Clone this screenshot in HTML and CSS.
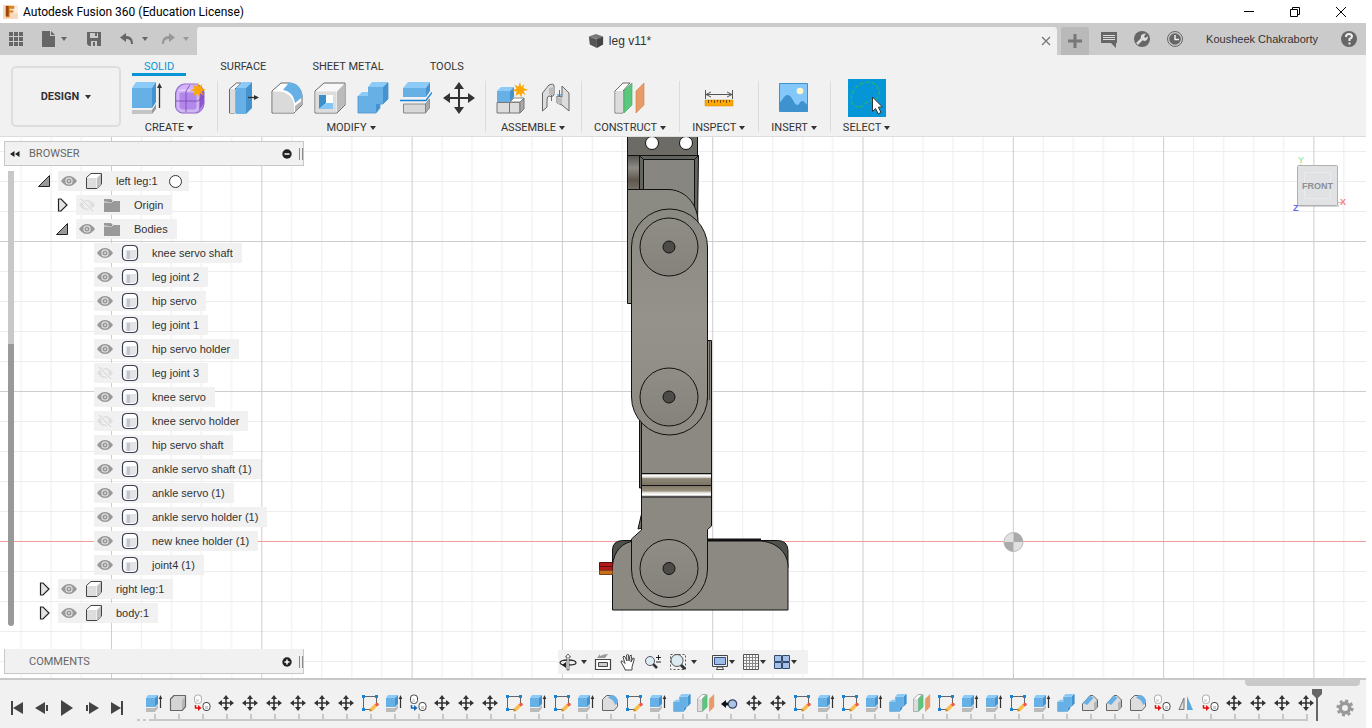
FILE: index.html
```html
<!DOCTYPE html>
<html lang="en">
<head>
<meta charset="utf-8">
<title>Autodesk Fusion 360 (Education License)</title>
<link rel="stylesheet" href="styles.css">
</head>
<body>
<svg class="sprite" aria-hidden="true">
  <symbol id="extrude" viewBox="0 0 32 32"><path fill="#c4c4c4" d="M0 28h20v4H0z"/><path fill="#999" d="m20 28 4-6v5l-4 5z"/><path fill="#66b0e6" d="M0 6h20v20H0z"/><path fill="#8ccaf8" d="m0 6 4-6h20l-4 6z"/><path fill="#4492cf" d="m20 6 4-6v20l-4 6z"/><path stroke="#333" stroke-width="1.300" d="M27.500 26V4"/><path fill="#333" d="m27.500 1 2.500 5h-5z"/></symbol>
  <symbol id="extrude-s" viewBox="0 0 18 18"><path fill="#bbb" d="M1 14h9l3-3v3l-3 4H1z"/><path fill="#66b0e6" d="M1 4h9v9H1z"/><path fill="#8ccaf8" d="m1 4 2-3h10l-3 3z"/><path fill="#4492cf" d="m10 4 3-3v9l-3 3z"/><path stroke="#333" stroke-width="1.200" d="M15.500 14V4"/><path fill="#333" d="m15.500 1 1.800 4h-3.600z"/></symbol>
  <symbol id="star" viewBox="0 0 16 16"><path fill="#fca702" d="m8 0 1.200 4.700L12.500 2l-1.300 4L16 7.800l-4.600 1.400 2.400 4L10 11l-.600 5-2-4.600L3.500 14l1.200-4.400L0 8.500 4.400 6.700 2.500 2.500l3.900 2.300z"/></symbol>
  <symbol id="form" viewBox="0 0 32 32"><path fill="#b388ea" stroke="#8b62c6" d="M.500 11Q2 3 9 2h12q7 2 8 8v12q-1 7-7 9H7q-6-1-6.500-7z"/><path fill="#d3b4fa" d="M2 9q3-6 8-6.500h12L20 9z"/><path fill="#8e57cb" d="m24 12 5-5v14l-5 7z"/><path fill="none" stroke="#fff" stroke-opacity=".4" stroke-width="3" d="M3 11v15q2 3 5 3h12q3-1 3-4V11q-2-2-5-2H7q-3 0-4 2z"/><path fill="none" stroke="#7444b0" stroke-width=".8" d="M11 9v21M1 19h22l6-5M11 9l4-6"/><use href="#star" x="15" y="0" width="16" height="16"/></symbol>
  <symbol id="press" viewBox="0 0 32 32"><path fill="#fafafa" stroke="#666" d="M1.500 31V7l7-6H13L7 7v24z"/><path fill="#dcdcdc" d="M2 7h5v24H2z"/><path fill="#66b0e6" d="M8 6h10v26H8z"/><path fill="#8ccaf8" d="m8 6 6-6h10l-6 6z"/><path fill="#4492cf" d="m18 6 6-6v26l-6 6z"/><path stroke="#333" stroke-width="1.300" d="M20 15.500h9"/><path fill="#333" d="m31 15.500-5-2.500v5z"/></symbol>
  <symbol id="fillet" viewBox="0 0 32 32"><path fill="#fff" stroke="#666" stroke-linejoin="round" d="M1 31V9L10 1h7c9 0 14 7 14 14v8l-8 8z"/><path fill="#dadada" d="M2 9.500h8C18 11 23 17 23 24v6.500H2z"/><path fill="#66b0e6" d="m12 8 6-7.500c8 0 13.500 6 13.500 14.500L24 21C23 14 19 9 12 8z"/><path fill="#b5b5b5" d="m24 24 6.500-5v4l-6.500 7z"/></symbol>
  <symbol id="fillet-s" viewBox="0 0 18 18"><path fill="#ddd" stroke="#666" stroke-linejoin="round" d="M1.500 16.500V5.500L5.500 1.500H9c5 0 7.500 4 7.500 7v4l-3.500 4z"/><path fill="#66b0e6" d="m7 4 2.500-3c5 0 7.500 3.500 7.500 7.500L14 11C13 7 11 4.500 7 4z"/></symbol>
  <symbol id="shell" viewBox="0 0 32 32"><path fill="#f8f8f8" stroke="#666" d="M1 31V9l9-8h21v22l-8 8z"/><path fill="#ddd" d="M1.500 9.500h21v21h-21z"/><path fill="#bbb" d="m23 9.500 7.500-8v21L23 30.500z"/><path fill="#fff" d="M5 13h14v14H5z"/><path fill="#3d8fc9" d="M5 13h7v8l-7 6z"/><path fill="#84c5f7" d="m5 27 7-6h7v6z"/></symbol>
  <symbol id="combine" viewBox="0 0 32 32"><path fill="#66b0e6" d="M1 14h10V5h15v17h-7v9H1z"/><path fill="#8ccaf8" d="m1 14 4-4h6v4zM11 5l4-5h16l-5 5z"/><path fill="#4492cf" d="m26 5 5-5v17l-5 5zm-7 17h4v4l-4 5z"/><path fill="none" stroke="#4a95ca" stroke-width=".8" d="M1 14v17h18l4-5v-4h3l5-5V1"/></symbol>
  <symbol id="split" viewBox="0 0 32 32"><path fill="#66b0e6" d="M3 6h23v9H3z"/><path fill="#8ccaf8" d="m3 6 5-6h22l-4 6z"/><path fill="#4492cf" d="m26 6 4-6v9l-4 6z"/><path fill="#d8d8d8" stroke="#888" d="M3.500 22h22v9h-22z"/><path fill="#aaa" stroke="#777" stroke-width=".7" d="m25.500 22 4-5v9l-4 5z"/><path fill="none" stroke="#1784d8" stroke-width="1.300" d="M0 18.500h26l6-8"/></symbol>
  <symbol id="move" viewBox="0 0 32 32"><path fill="#333" d="m16 0 5 7h-4v8h8v-4l7 5-7 5v-4h-8v8h4l-5 7-5-7h4v-8H7v4l-7-5 7-5v4h8V7h-4z"/></symbol>
  <symbol id="move-s" viewBox="0 0 16 16"><path fill="#333" d="m8 0 3 4H8.800v3.200H12V5l4 3-4 3V8.800H8.800V12H11l-3 4-3-4h2.200V8.800H4V11L0 8l4-3v2.200h3.200V4H5z"/></symbol>
  <symbol id="component" viewBox="0 0 32 32"><path fill="#66b0e6" d="M1 9h13v11H1z"/><path fill="#8ccaf8" d="m1 9 4-4h13l-4 4z"/><path fill="#4492cf" d="m14 9 4-4v10l-4 5z"/><path fill="#ddd" stroke="#777" d="M1 20.500h12.500V31H1zm12.500 0H24V31H13.500z"/><path fill="#fff" stroke="#888" d="m14 20 4-4h10l-4 4z"/><path fill="#aaa" stroke="#777" d="m24 20.500 4-4.500v11l-4 4z"/><use href="#star" x="16" y="0" width="16" height="16"/></symbol>
  <symbol id="joint" viewBox="0 0 32 32"><path fill="#ddd" stroke="#666" d="M3.500 29V11L10 3q5-2 5 1v9q-2 3-5 1-2 0-2 4v7zM30 29V11l-7-7v11l-5-1v7l5 2z"/><path fill="#bbb" d="m10 6 5-1v7q-3 2-5 0zM18 15q2 2 5 1v6q-4 1-5-1z"/><path fill="none" stroke="#1784d8" d="M12.500 13v6m8-11v6m-2-2 2 2 2-2"/></symbol>
  <symbol id="plane" viewBox="0 0 32 32"><path fill="#fff" stroke="#666" d="M1 31V9l8-8h7L9 9v22z"/><path fill="#dcdcdc" d="M1.500 9H9v21.500H1.500z"/><path fill="#5ac77d" stroke="#3ca461" stroke-width=".6" d="m10 9 8-8v22l-8 8z"/><path fill="#e99a69" stroke="#d47d45" stroke-width=".6" d="m22 9 8-8v22l-8 8z"/></symbol>
  <symbol id="measure" viewBox="0 0 32 32"><path stroke="#555" fill="none" d="M2.500 8v9m27-9v9M4 12.500h24M8 10l-5 2.500L8 15m16-5 5 2.500-5 2.500"/><path fill="#fca702" stroke="#d28a00" stroke-width=".5" d="M2 18h28v6H2z"/><path stroke="#795000" d="M5.500 18v3m3-3v2m3-2v3m3-3v2m3-2v3m3-3v2m3-2v3m3-3v2"/></symbol>
  <symbol id="picture" viewBox="0 0 32 32"><path fill="#84c8fb" stroke="#3e92cd" d="M1.500 1.500h28v28h-28z"/><circle cx="22" cy="9" r="3.300" fill="#fff7cb"/><path fill="#3e92cd" d="M2 20c3-2 4-7 7.500-7 5 0 6 10 10 10 2 0 2-4 5-4 2 0 3 3 5 4v7H2z"/></symbol>
  <symbol id="select" viewBox="0 0 38 38"><path fill="none" stroke="#2ab46c" stroke-width="1.200" stroke-dasharray="4 2" d="M11 28c-9-1-9-8-6-15S15 3 21 3c8 1 11 7 10 13-2 7-8 4-12 7-3 2-4 6-8 5z"/><path fill="#fff" stroke="#333" d="M24.500 18v14.500l3-3 2.700 5.300 2.800-1.300-2.600-5.300 4-.200z"/></symbol>
  <symbol id="cube" viewBox="0 0 18 18"><path fill="#fff" stroke="#444" stroke-linejoin="round" d="M1.500 5.500 6 1.500h10.500V12L12 16.500H1.500z"/><path fill="#ddd" d="M2 6h9.500v10H2z"/><path fill="#bfc0c4" d="m12 6 4-4v10l-4 4z"/></symbol>
  <symbol id="solid-s" viewBox="0 0 18 18"><path fill="#d4d4d4" stroke="#666" stroke-width="1.200" stroke-linejoin="round" d="M1.500 5 5 1.500h11.500v11L13 16.500H1.500z"/><path fill="#b5b5b5" d="m13 6 3-3v9l-3 4z"/></symbol>
  <symbol id="body" viewBox="0 0 18 18"><path fill="#fff" stroke="#394052" stroke-width="1.200" d="M1.500 6q0-4.500 4.500-4.500h6q4.500 0 4.500 4.500v6q0 4.500-4.500 4.500H6q-4.500 0-4.500-4.500z"/><path fill="#e2e4ea" d="M3 6h12v6q0 3-3 3H6q-3 0-3-3z"/><path fill="#c2c5cc" d="M6 7h3v8H6z"/><path fill="#fff" d="M3 6h1.500v7H3z"/></symbol>
  <symbol id="folder" viewBox="0 0 18 16"><path fill="#999" d="M1 2h7l2 2h7v11H1z"/><path stroke="#eee" d="M1 5h8l1-1"/></symbol>
  <symbol id="eye" viewBox="0 0 16 12"><path fill="#999" d="M0 6q3.500-5 8-5t8 5q-3.500 5-8 5T0 6z"/><circle cx="8" cy="6" r="3.600" fill="#eee"/><circle cx="8" cy="6" r="2.600" fill="#999"/><circle cx="8" cy="6" r="1" fill="#ddd"/></symbol>
  <symbol id="eye-off" viewBox="0 0 16 12"><path fill="#dedede" d="M0 6q3.500-5 8-5t8 5q-3.500 5-8 5T0 6z"/><circle cx="8" cy="6" r="3.500" fill="#f1f1f1"/><circle cx="8" cy="6" r="2" fill="#dedede"/><path stroke="#f1f1f1" stroke-width="3" d="m2 0 12 12"/><path stroke="#d0d0d0" d="m2 0 12 12"/></symbol>
  <symbol id="open" viewBox="0 0 14 14"><path fill="#999" stroke="#222" d="M12.500 1.500v11h-11z"/></symbol>
  <symbol id="closed" viewBox="0 0 14 14"><path fill="#e4e4e4" stroke="#222" stroke-width="1.200" d="M3.500 1H6l6 6-6 6H3.500z"/></symbol>
  <symbol id="sketch" viewBox="0 0 18 18"><path fill="none" stroke="#666" d="M3 2.500h12.500V10M2.500 3v12.500H9"/><path fill="#1784d8" d="M1 1h3v3H1zm13 0h3v3h-3zM1 14h3v3H1z"/><path stroke="#f9bd4c" stroke-width="3.500" d="m10 16 5-5"/><path fill="#c48420" d="m8.500 17.500.300-3 2.500 2.500z"/><circle cx="16" cy="10.500" r="1.800" fill="#f05454"/></symbol>
  <symbol id="link-parts" viewBox="0 0 18 18"><rect x="1.500" y="1" width="7" height="8.500" rx="3" fill="#fff" stroke="currentColor"/><path fill="#ddd" d="M3 5h3v3H3z"/><rect x="10" y="8.500" width="7" height="8" rx="3" fill="#fff" stroke="#444"/><path fill="#ccc" d="M12 12h3v3h-3z"/></symbol>
  <symbol id="joint-red" viewBox="0 0 18 18"><use href="#link-parts" width="18" height="18" color="#aaa"/><path fill="none" stroke="#e61212" stroke-width="1.500" d="M2.500 11v3H6"/><path fill="#e61212" d="m8.500 14-3.500-3v6z"/></symbol>
  <symbol id="joint-blue" viewBox="0 0 18 18"><use href="#link-parts" width="18" height="18" color="#444"/><path fill="none" stroke="#1464b4" stroke-width="1.500" d="M2.500 11v3H6"/><path fill="#1464b4" d="m8.500 14-3.500-3v6z"/></symbol>
  <symbol id="origin-joint" viewBox="0 0 18 18"><path fill="#111" d="m0 10 5-4v2.500h4v3H5V14z"/><circle cx="11.500" cy="10" r="4.200" fill="#abc4e8" stroke="#3a4763" stroke-width="1.200"/></symbol>
  <symbol id="chamfer" viewBox="0 0 18 18"><path fill="#ddd" stroke="#666" stroke-linejoin="round" d="M1.500 16.500V10L9 1.500h3L16.500 6v7L13 16.500z"/><path fill="#b5b5b5" d="m13 9 3-3v7l-3 3z"/><path fill="#66b0e6" d="m2 8.500 7-7L12.500 4l-6.500 7z"/></symbol>
  <symbol id="mirror" viewBox="0 0 18 18"><path fill="#ddd" stroke="#777" d="M7 4v11.500H2z"/><path fill="#5aaae2" d="M10 2v14h6z"/></symbol>
</svg>

<header class="titlebar">
  <svg class="logo" viewBox="0 0 16 16"><path fill="#f8d9bd" d="M0 1h16v15H0z"/><path fill="#fff" d="M11 0h5v10h-5z" opacity=".5"/><path fill="#e07e22" d="M3 2h9v3H7v2h4v2H7v5H3z"/><path fill="#99480c" d="M3 2h3v11H3z"/></svg>
  <h1>Autodesk Fusion 360 (Education License)</h1>
  <div class="window-buttons">
    <button aria-label="Minimize"><svg viewBox="0 0 12 12"><path d="M1 5.500h10"/></svg></button>
    <button aria-label="Restore"><svg viewBox="0 0 12 12"><path d="M1.500 3.500h7v7h-7zM3.500 3V1.500h7v7H9"/></svg></button>
    <button aria-label="Close"><svg viewBox="0 0 12 12"><path d="m1 1 10 10M11 1 1 11"/></svg></button>
  </div>
</header>

<div class="appbar">
  <div class="quick">
    <button aria-label="Data panel"><svg viewBox="0 0 16 16"><path d="M1 1h4v4H1zm5 0h4v4H6zm5 0h4v4h-4zM1 6h4v4H1zm5 0h4v4H6zm5 0h4v4h-4zM1 11h4v4H1zm5 0h4v4H6zm5 0h4v4h-4z"/></svg></button>
    <button aria-label="File"><svg viewBox="0 0 16 16"><path d="M1 0h8v5h5v11H1zm9 0 4 4h-4z"/></svg><i class="caret"></i></button>
    <button class="save" aria-label="Save"><svg viewBox="0 0 16 16"><path fill-rule="evenodd" d="M1 1h14v14H3l-2-2zm3 1v5h8V2zm1 8v5h6v-5z"/><path d="M9 2h2v3H9zM7 11h2v4H7z"/></svg></button>
    <button class="undo" aria-label="Undo"><svg viewBox="0 0 16 16"><path d="M7 2v3c5 0 7 3 7 8h-2c0-4-2-5-5-5v3L1 6.500z"/></svg><i class="caret"></i></button>
    <button class="redo" aria-label="Redo" disabled><svg viewBox="0 0 16 16"><path d="M9 2v3c-5 0-7 3-7 8h2c0-4 2-5 5-5v3l6-4.500z"/></svg><i class="caret"></i></button>
  </div>
  <div class="document">
    <span class="document-name"><svg viewBox="0 0 18 18"><path fill="#777" d="m1 4 8-3 8 3-6 3z"/><path fill="#555" d="m1 4 9 3v10l-8-4z"/><path fill="#444" d="m10 7 7-3v9l-7 4z"/></svg>leg v11*</span>
    <button aria-label="Close leg v11"><svg viewBox="0 0 10 10"><path fill="none" stroke="#777" stroke-width="1.300" d="m1 1 8 8M9 1 1 9"/></svg></button>
  </div>
  <button class="new-tab" aria-label="New design"><svg viewBox="0 0 14 14"><path stroke="#777" stroke-width="3" d="M7 0v14M0 7h14"/></svg></button>
  <div class="account">
    <button aria-label="Comments"><svg viewBox="0 0 18 18"><path d="M1 2h16v11h-1v5l-5-5H1z"/><path stroke="#ddd" d="M3 5.500h12m-12 2h12m-12 2h12"/></svg></button>
    <button aria-label="Extensions"><svg viewBox="0 0 18 18"><circle cx="9" cy="9" r="8"/><path stroke="#ddd" stroke-width="2.500" d="m4 14 6-6"/><path fill="#ddd" d="M8 9q-1-4 2-5l3-.500-2 3 1.500 1.500L15 6q0 5-4 5z"/></svg></button>
    <button aria-label="Job status"><svg viewBox="0 0 18 18"><circle cx="9" cy="9" r="7.500" fill="none" stroke="#666"/><circle cx="9" cy="9" r="5.800"/><path fill="none" stroke="#eee" stroke-width="1.500" d="M9 5v4.500h4"/></svg></button>
    <button class="user">Kousheek Chakraborty</button>
    <button aria-label="Help"><svg viewBox="0 0 18 18"><circle cx="9" cy="9" r="8"/><path fill="none" stroke="#eee" stroke-width="2" d="M6 7q0-3 3-3t3 2.500Q12 8 9.500 9v2"/><path fill="#eee" d="M8.500 12.500h2v2h-2z"/></svg></button>
  </div>
</div>

<div class="ribbon">
  <button class="workspace">DESIGN<i class="caret"></i></button>
  <div class="ribbon-body">
    <nav class="tabs"><button class="tab active">SOLID</button><button class="tab">SURFACE</button><button class="tab">SHEET METAL</button><button class="tab">TOOLS</button></nav>
    <div class="groups">
      <section class="group"><div class="tools"><button aria-label="Extrude"><svg><use href="#extrude"/></svg></button><button aria-label="Create form"><svg><use href="#form"/></svg></button></div><button class="menu">CREATE<i class="caret"></i></button></section>
      <section class="group"><div class="tools"><button aria-label="Press pull"><svg><use href="#press"/></svg></button><button aria-label="Fillet"><svg><use href="#fillet"/></svg></button><button aria-label="Shell"><svg><use href="#shell"/></svg></button><button aria-label="Combine"><svg><use href="#combine"/></svg></button><button aria-label="Split body"><svg><use href="#split"/></svg></button><button aria-label="Move"><svg><use href="#move"/></svg></button></div><button class="menu">MODIFY<i class="caret"></i></button></section>
      <section class="group"><div class="tools"><button aria-label="New component"><svg><use href="#component"/></svg></button><button aria-label="Joint"><svg><use href="#joint"/></svg></button></div><button class="menu">ASSEMBLE<i class="caret"></i></button></section>
      <section class="group"><div class="tools"><button aria-label="Offset plane"><svg><use href="#plane"/></svg></button></div><button class="menu">CONSTRUCT<i class="caret"></i></button></section>
      <section class="group"><div class="tools"><button aria-label="Measure"><svg><use href="#measure"/></svg></button></div><button class="menu">INSPECT<i class="caret"></i></button></section>
      <section class="group"><div class="tools"><button aria-label="Insert image"><svg><use href="#picture"/></svg></button></div><button class="menu">INSERT<i class="caret"></i></button></section>
      <section class="group"><div class="tools"><button class="selected" aria-label="Select"><svg><use href="#select"/></svg></button></div><button class="menu">SELECT<i class="caret"></i></button></section>
    </div>
  </div>
</div>

<main class="canvas">
  <svg class="scene" aria-label="Leg model, front view">
    <defs>
      <pattern id="grid" x="111" y="91" width="150.300" height="150" patternUnits="userSpaceOnUse">
        <path fill="none" stroke="#ededed" d="M30.500 0v151M60.500 0v151M90.500 0v151M120.500 0v151M0 30.500h151M0 60.500h151M0 90.500h151M0 120.500h151"/>
        <path fill="none" stroke="#cdcdcd" d="M.500 0v151M0 .500h151"/>
      </pattern>
      <linearGradient id="metal" x1="0" y1="0" x2="0" y2="1"><stop offset="0" stop-color="#8b8a82"/><stop offset=".5" stop-color="#94928b"/><stop offset="1" stop-color="#8c8a82"/></linearGradient>
      <linearGradient id="disc" x1="0" y1="0" x2="0" y2="1"><stop offset="0" stop-color="#8f8d85"/><stop offset="1" stop-color="#84827b"/></linearGradient>
      <linearGradient id="pocket" x1="0" y1="0" x2="0" y2="1"><stop offset="0" stop-color="#55544f"/><stop offset=".35" stop-color="#8e8b86"/><stop offset=".7" stop-color="#5e574d"/><stop offset="1" stop-color="#77736b"/></linearGradient>
      <linearGradient id="band" x1="0" y1="0" x2="0" y2="1"><stop offset="0" stop-color="#777069"/><stop offset=".08" stop-color="#fff"/><stop offset=".16" stop-color="#ddd8d2"/><stop offset=".22" stop-color="#8c8474"/><stop offset=".5" stop-color="#7b7464"/><stop offset=".74" stop-color="#9b927f"/><stop offset=".82" stop-color="#eae6e2"/><stop offset=".9" stop-color="#fff"/><stop offset="1" stop-color="#777"/></linearGradient>
    </defs>
    <g transform="translate(0 -137)">
      <rect y="137" width="100%" height="100%" fill="url(#grid)"/>
      <rect y="541" width="100%" height="1" fill="#f09c9c"/>
      <rect x="1013" y="674" width="1" height="4" fill="#90ee90"/>
      <g stroke="#111">
        <path fill="#6c6b66" d="M627.500 130h70v26h-70z"/>
        <circle cx="652" cy="143" r="6.500" fill="#fff"/><circle cx="686" cy="143" r="6.500" fill="#fff"/>
        <path fill="url(#pocket)" d="M627.500 155.500h12v35h-12z"/>
        <path fill="#62655f" d="M639.500 155.500h59l-1 69h-58z"/>
        <path fill="#878680" d="M643.500 159.500h51v64h-51z"/>
        <path fill="none" d="m639.500 155.500 4 4m51 0 4-4"/>
        <path fill="#8b8a83" d="M627.500 189.500H668c16 0 29 13 30 31v83h-70.500z"/>
        <path fill="#706e68" d="M639.500 420h8v68h-8zM638 529l4-17v16z"/>
        <path fill="#4f514c" d="M612.500 568v-18q0-9 10-9.500h155q10 0 10.500 10v17z"/>
        <path fill="#8b8982" d="M612.500 610v-44c1-15 10-24 22-25h124c16 0 29 10 29.500 25v44z"/>
        <path stroke-width="2" d="M707 539.500h54"/>
        <path fill="#8b8982" d="M641.500 400h66v-59.500h4V526l-4 3.500V569a38 38 0 0 1-76 0v-30l10-9z"/>
        <path fill="none" stroke="#444" d="M709.500 341v59"/>
        <path fill="url(#metal)" d="M631.500 247a38 38 0 0 1 76 0v150a38 38 0 0 1-76 0z"/>
        <path fill="url(#band)" d="M641.500 473.500h70v23.500h-70z"/><path d="M641 485.500h70"/>
        <g fill="url(#disc)"><circle cx="669" cy="247" r="29"/><circle cx="669" cy="397" r="29"/><circle cx="669" cy="568.500" r="29"/></g>
        <g fill="#4c4b47"><circle cx="669" cy="247" r="6"/><circle cx="669" cy="397" r="6"/><circle cx="669" cy="568.500" r="6"/></g>
        <path fill="#b31818" stroke="#511" d="M599.500 562.500h13v8h-13zm0 4h13"/><path fill="#c96f16" stroke="#742" d="M599.500 570.500h13v4h-13z"/>
      </g>
      <circle cx="1013.500" cy="542" r="9.500" fill="#e0e0e0" stroke="#bbb"/><path fill="#aaa" d="M1013.500 542v-9.500a9.500 9.500 0 0 1 9.500 9.500zm0 0v9.500a9.500 9.500 0 0 1-9.500-9.500z"/>
    </g>
  </svg>

  <aside class="browser">
    <header class="panel-head"><button aria-label="Collapse browser"><svg viewBox="0 0 12 10"><path d="M5.500 2v6L1 5zm5 0v6L6 5z"/></svg></button><h2>BROWSER</h2><button aria-label="Minimize browser"><svg viewBox="0 0 10 10"><circle cx="5" cy="5" r="4.700"/><path stroke="#fff" stroke-width="1.500" d="M2.500 5h5"/></svg></button><i class="grip"></i></header>
    <div class="tree-area">
      <div class="tree-scroll"></div>
      <ul class="tree">
        <li><svg class="twist"><use href="#open"/></svg><div class="node"><svg class="eye"><use href="#eye"/></svg><svg class="kind"><use href="#cube"/></svg><span>left leg:1</span><input type="radio" aria-label="Activate left leg"></div></li>
        <li class="level-1"><svg class="twist"><use href="#closed"/></svg><div class="node"><svg class="eye"><use href="#eye-off"/></svg><svg class="kind"><use href="#folder"/></svg><span>Origin</span></div></li>
        <li class="level-1"><svg class="twist"><use href="#open"/></svg><div class="node"><svg class="eye"><use href="#eye"/></svg><svg class="kind"><use href="#folder"/></svg><span>Bodies</span></div></li>
        <li class="level-2"><div class="node"><svg class="eye"><use href="#eye"/></svg><svg class="kind"><use href="#body"/></svg><span>knee servo shaft</span></div></li>
        <li class="level-2"><div class="node"><svg class="eye"><use href="#eye"/></svg><svg class="kind"><use href="#body"/></svg><span>leg joint 2</span></div></li>
        <li class="level-2"><div class="node"><svg class="eye"><use href="#eye"/></svg><svg class="kind"><use href="#body"/></svg><span>hip servo</span></div></li>
        <li class="level-2"><div class="node"><svg class="eye"><use href="#eye"/></svg><svg class="kind"><use href="#body"/></svg><span>leg joint 1</span></div></li>
        <li class="level-2"><div class="node"><svg class="eye"><use href="#eye"/></svg><svg class="kind"><use href="#body"/></svg><span>hip servo holder</span></div></li>
        <li class="level-2"><div class="node"><svg class="eye"><use href="#eye-off"/></svg><svg class="kind"><use href="#body"/></svg><span>leg joint 3</span></div></li>
        <li class="level-2"><div class="node"><svg class="eye"><use href="#eye"/></svg><svg class="kind"><use href="#body"/></svg><span>knee servo</span></div></li>
        <li class="level-2"><div class="node"><svg class="eye"><use href="#eye-off"/></svg><svg class="kind"><use href="#body"/></svg><span>knee servo holder</span></div></li>
        <li class="level-2"><div class="node"><svg class="eye"><use href="#eye"/></svg><svg class="kind"><use href="#body"/></svg><span>hip servo shaft</span></div></li>
        <li class="level-2"><div class="node"><svg class="eye"><use href="#eye"/></svg><svg class="kind"><use href="#body"/></svg><span>ankle servo shaft (1)</span></div></li>
        <li class="level-2"><div class="node"><svg class="eye"><use href="#eye"/></svg><svg class="kind"><use href="#body"/></svg><span>ankle servo (1)</span></div></li>
        <li class="level-2"><div class="node"><svg class="eye"><use href="#eye"/></svg><svg class="kind"><use href="#body"/></svg><span>ankle servo holder (1)</span></div></li>
        <li class="level-2"><div class="node"><svg class="eye"><use href="#eye"/></svg><svg class="kind"><use href="#body"/></svg><span>new knee holder (1)</span></div></li>
        <li class="level-2"><div class="node"><svg class="eye"><use href="#eye"/></svg><svg class="kind"><use href="#body"/></svg><span>joint4 (1)</span></div></li>
        <li><svg class="twist"><use href="#closed"/></svg><div class="node"><svg class="eye"><use href="#eye"/></svg><svg class="kind"><use href="#cube"/></svg><span>right leg:1</span></div></li>
        <li><svg class="twist"><use href="#closed"/></svg><div class="node"><svg class="eye"><use href="#eye"/></svg><svg class="kind"><use href="#cube"/></svg><span>body:1</span></div></li>
      </ul>
    </div>
    <header class="panel-head comments"><h2>COMMENTS</h2><button aria-label="Add comment"><svg viewBox="0 0 10 10"><circle cx="5" cy="5" r="4.700"/><path stroke="#fff" stroke-width="1.500" d="M2.500 5h5M5 2.500v5"/></svg></button><i class="grip"></i></header>
  </aside>

  <svg class="viewcube" viewBox="0 0 60 64" aria-label="View cube">
    <path stroke="#bfe8b4" d="M10.500 10v3"/><path stroke="#f0b0b0" d="M46 48.500h6"/>
    <path fill="#aaa" opacity=".5" d="M9 50h40v3H9z"/>
    <rect x="7.500" y="11.500" width="40" height="40" rx="1" fill="#e1e2e4" stroke="#b0b0b0"/><path fill="none" stroke="#eaeaea" d="M14.500 18.500h26v26h-26z"/>
    <text class="cube-face" x="27.500" y="35" text-anchor="middle">FRONT</text>
    <text class="axis" x="8" y="9" fill="#a5eca5">Y</text><text class="axis" x="50" y="51" fill="#f58080">X</text><text class="axis" x="3" y="57" fill="#6464ee">Z</text>
  </svg>

  <div class="viewbar">
    <button aria-label="Orbit"><svg viewBox="0 0 18 18"><path fill="none" stroke="#333" stroke-width="1.300" d="M1 10q0-3 8-3t8 3q0 2-8 2M1 10q1 2 5 2"/><path fill="#fff" stroke="#444" stroke-width=".8" d="M8 17V4L6.500 4 9 1l2.500 3H10v13z"/><path fill="#222" d="m3 12 4-3v6z"/></svg><i class="caret"></i></button>
    <button aria-label="Look at"><svg viewBox="0 0 18 18"><path fill="#fff" stroke="#444" stroke-width="1.200" d="M1.500 6.500h15v10h-15z"/><path fill="#ccc" stroke="#444" d="M4.500 9.500h9v4h-9z"/><path fill="#999" d="m3 5 3-4v2q4-2 8-2l-3 4z"/></svg></button>
    <button aria-label="Pan"><svg viewBox="0 0 18 18"><path fill="#fff" stroke="#444" stroke-linejoin="round" d="M6 16 2 9q0-2 2-.500l2 2L4 4q1-2 2 0l2 4-.500-6q1.500-1 2 0l.500 6 1-5.500q2-1 1.500 1L12 9l2-4q2 0 1 2l-2 7v3H6z"/></svg></button>
    <button aria-label="Zoom"><svg viewBox="0 0 18 18"><path stroke="#333" stroke-width="2.500" d="m9 11 4 4"/><circle cx="6" cy="8" r="4.500" fill="#dcecf2" stroke="#556"/><path stroke="#222" d="M12 4.500h5M14.500 2v5m-2.500 2h5"/></svg></button>
    <button aria-label="Fit"><svg viewBox="0 0 18 18"><path fill="none" stroke="#555" stroke-dasharray="2 2" d="M1.500 1.500h15v15h-15z"/><path stroke="#333" stroke-width="3" d="m11 11 5 5"/><circle cx="8" cy="7.500" r="6" fill="#dcebf0" stroke="#555"/></svg><i class="caret"></i></button>
    <button class="compact apart" aria-label="Display settings"><svg viewBox="0 0 18 18"><path fill="#eee" stroke="#444" d="M1.500 2.500h15v11h-15z"/><path fill="#9dbce8" stroke="#334f85" d="M3.500 4.500h11v7h-11z"/><path fill="#fff" stroke="#444" d="M6.500 14h5l1 2.500h-7z"/></svg><i class="caret"></i></button>
    <button class="compact" aria-label="Grid"><svg viewBox="0 0 18 18"><path fill="#f8f8f8" stroke="#555" d="M1.500 1.500h15v15h-15z"/><path stroke="#888" d="M4.500 2v14m3-14v14m3-14v14m3-14v14M2 4.500h14m-14 3h14m-14 3h14m-14 3h14"/></svg><i class="caret"></i></button>
    <button class="compact" aria-label="Viewports"><svg viewBox="0 0 18 18"><path fill="#a5c1e8" stroke="#334a70" d="M1.500 2.500h7v6h-7zm8 0h7v6h-7zm-8 7h7v6h-7zm8 0h7v6h-7z"/></svg><i class="caret"></i></button>
  </div>
</main>

<footer class="timeline">
  <div class="playback">
    <button aria-label="First"><svg viewBox="0 0 16 16"><path d="M2 1h2v14H2zm12 1v12L4 8z"/></svg></button>
    <button aria-label="Step back"><svg viewBox="0 0 16 16"><path d="M11 2v12L1 8zm1 3h2v6h-2z"/></svg></button>
    <button aria-label="Play"><svg viewBox="0 0 16 16"><path d="M2 0v16l12-8z"/></svg></button>
    <button aria-label="Step forward"><svg viewBox="0 0 16 16"><path d="M5 2v12l10-6zM2 5h2v6H2z"/></svg></button>
    <button aria-label="Last"><svg viewBox="0 0 16 16"><path d="M2 2v12l10-6zm10-1h2v14h-2z"/></svg></button>
  </div>
  <ol class="features">
    <li><svg><use href="#extrude-s"/></svg></li><li><svg><use href="#solid-s"/></svg></li><li><svg><use href="#joint-red"/></svg></li><li><svg class="arrows"><use href="#move-s"/></svg></li><li><svg class="arrows"><use href="#move-s"/></svg></li><li><svg class="arrows"><use href="#move-s"/></svg></li><li><svg class="arrows"><use href="#move-s"/></svg></li><li><svg class="arrows"><use href="#move-s"/></svg></li><li><svg class="arrows"><use href="#move-s"/></svg></li><li><svg><use href="#sketch"/></svg></li>
    <li><svg><use href="#extrude-s"/></svg></li><li><svg><use href="#joint-blue"/></svg></li><li><svg class="arrows"><use href="#move-s"/></svg></li><li><svg class="arrows"><use href="#move-s"/></svg></li><li><svg class="arrows"><use href="#move-s"/></svg></li><li><svg><use href="#sketch"/></svg></li><li><svg><use href="#extrude-s"/></svg></li><li><svg><use href="#sketch"/></svg></li><li><svg><use href="#extrude-s"/></svg></li><li><svg><use href="#fillet-s"/></svg></li>
    <li><svg><use href="#sketch"/></svg></li><li><svg><use href="#extrude-s"/></svg></li><li><svg><use href="#combine"/></svg></li><li><svg><use href="#plane"/></svg></li><li><svg><use href="#origin-joint"/></svg></li><li><svg class="arrows"><use href="#move-s"/></svg></li><li><svg class="arrows"><use href="#move-s"/></svg></li><li><svg><use href="#sketch"/></svg></li><li><svg><use href="#extrude-s"/></svg></li><li><svg><use href="#sketch"/></svg></li>
    <li><svg><use href="#extrude-s"/></svg></li><li><svg><use href="#combine"/></svg></li><li><svg><use href="#plane"/></svg></li><li><svg><use href="#sketch"/></svg></li><li><svg><use href="#extrude-s"/></svg></li><li><svg><use href="#extrude-s"/></svg></li><li><svg><use href="#sketch"/></svg></li><li><svg><use href="#extrude-s"/></svg></li><li><svg><use href="#combine"/></svg></li><li><svg><use href="#chamfer"/></svg></li>
    <li><svg><use href="#chamfer"/></svg></li><li><svg><use href="#fillet-s"/></svg></li><li><svg><use href="#joint-red"/></svg></li><li><svg><use href="#mirror"/></svg></li><li><svg><use href="#joint-red"/></svg></li><li><svg class="arrows"><use href="#move-s"/></svg></li><li><svg class="arrows"><use href="#move-s"/></svg></li><li><svg class="arrows"><use href="#move-s"/></svg></li><li><svg class="arrows"><use href="#move-s"/></svg></li>
  </ol>
  <svg class="marker" viewBox="0 0 10 32"><path fill="#666" d="M0 0h10v5L6 9v23H4V9L0 5z"/></svg>
  <button class="settings" aria-label="Timeline settings"><svg viewBox="0 0 18 18"><circle cx="9" cy="9" r="4.700" fill="none" stroke="#999" stroke-width="3.500"/><circle cx="9" cy="9" r="7.300" fill="none" stroke="#999" stroke-width="2.600" stroke-dasharray="3 2.730"/></svg></button>
  <div class="timeline-scroll"></div>
</footer>
</body>
</html>
```
FILE: styles.css
```css
* { box-sizing: border-box; }
body {
  margin: 0;
  padding-right: 6px;
  height: 100vh;
  display: flex;
  flex-direction: column;
  overflow: hidden;
  background: #fff;
  color: #333;
  font: 11px/16px "Liberation Sans", Arial, sans-serif;
}
button { margin: 0; padding: 0; border: 0; background: none; color: inherit; font: inherit; display: flex; align-items: center; justify-content: center; white-space: nowrap; }
h1, h2, ul, ol { margin: 0; padding: 0; font: inherit; list-style: none; }
svg { display: block; flex: none; }
.sprite { position: absolute; width: 0; height: 0; }
.caret { border: 3px solid transparent; border-top: 4px solid currentColor; border-bottom: 0; flex: none; }

.titlebar { display: flex; align-items: center; height: 23px; flex: none; color: #000; }
.logo { width: 15px; height: 15px; margin: 0 5px 0 3px; }
.titlebar h1 { font: 12px/16px Roboto, "Open Sans", sans-serif; }
.window-buttons { display: flex; margin: 0 2px 0 auto; }
.window-buttons button { width: 46px; height: 20px; }
.window-buttons svg { width: 12px; height: 12px; fill: none; stroke: #000; }

.appbar { display: flex; height: 32px; flex: none; background: #cbcbcb; padding-right: 8px; }
.appbar svg { fill: #666; }
.quick { display: flex; align-items: center; width: 197px; padding-left: 8px; gap: 17px; }
.quick button { gap: 4px; }
.quick svg { width: 16px; height: 16px; }
.quick .caret { color: #666; }
.quick .redo { opacity: .5; }
.quick .undo, .quick .redo { gap: 7px; margin-right: -5px; }
.quick .save { margin-left: 2px; }
.document { flex: 1; display: flex; align-items: center; margin-top: 4px; padding-right: 6px; background: #f1f1f1; border-radius: 3px 3px 0 0; }
.document-name { flex: 1; display: flex; align-items: center; justify-content: center; gap: 4px; font-size: 12px; }
.document-name svg { width: 18px; height: 16px; }
.document button svg { width: 10px; height: 10px; }
.new-tab { width: 28px; margin: 4px 0 0 4px; background: #b9b9b9; border-radius: 3px 3px 0 0; }
.new-tab svg { width: 14px; height: 14px; }
.account { display: flex; align-items: center; gap: 15px; padding-left: 11px; }
.account svg { width: 18px; height: 18px; }
.user { margin: 0 7px; }

.ribbon { display: flex; height: 82px; flex: none; background: #f1f1f1; border-bottom: 1px solid #ddd; font: 11px/16px Roboto, "Liberation Sans", sans-serif; }
.workspace { width: 110px; height: 61px; margin: 11px 0 0 11px; gap: 6px; border: 2px solid #ddd; border-radius: 5px; font-weight: 700; }
.tabs { display: flex; gap: 22px; padding-left: 11px; height: 22px; }
.tab { height: 21px; padding: 5px 12px 0; border-bottom: 3px solid transparent; line-height: 13px; }
.tab.active { color: #0696d7; border-color: #0696d7; }
.groups { display: flex; height: 59px; }
.group { display: flex; flex-direction: column; align-items: center; position: relative; padding: 2px 5px 0; }
.group + .group::before { content: ""; position: absolute; left: 0; top: 4px; bottom: 4px; width: 1px; background: #dcdcdc; }
.tools { display: flex; height: 38px; align-items: center; }
.tools button { width: 43px; height: 38px; }
.tools svg { width: 32px; height: 32px; }
.tools .selected { width: 38px; background: #0696d7; }
.tools .selected svg { width: 38px; height: 38px; }
.menu { padding: 3px 8px 0; gap: 3px; }

.canvas { position: relative; flex: 1; min-height: 0; display: flex; overflow: hidden; }
.scene { position: absolute; inset: 0; width: 100%; height: 100%; }
.browser { position: relative; width: 304px; padding: 4px 0 4px 4px; display: flex; flex-direction: column; }
.panel-head { display: flex; align-items: center; height: 25px; flex: none; background: #f1f1f1; border: 1px solid #c8c8c8; color: #666; font: 11px/16px Roboto, "Liberation Sans", sans-serif; padding: 1px 0 0 4px; }
.panel-head h2 { flex: 1; margin-left: 8px; }
.panel-head button svg { width: 12px; height: 10px; fill: #222; }
.comments { border-top: 0; }
.comments h2 { margin-left: 20px; }
.grip { width: 4px; height: 12px; margin-left: 6px; border: 1px solid #888; border-width: 0 1px; }
.tree-area { flex: 1; min-height: 0; display: flex; padding: 3px 0 0 4px; }
.tree-scroll { width: 6px; height: 455px; margin-top: 2px; border-radius: 0 0 3px 3px; background: linear-gradient(#c8c8ca 38%, #999 38%); }
.tree { padding-left: 23px; }
.tree li { display: flex; align-items: center; height: 24px; }
.tree .level-1 { padding-left: 18px; }
.tree .level-2 { padding-left: 57px; }
.twist { width: 14px; height: 14px; margin-right: 7px; }
.node { display: flex; align-items: center; height: 20px; padding: 0 9px 0 3px; background: #f1f1f1; white-space: nowrap; }
.eye { width: 16px; height: 12px; margin-right: 8px; }
.kind { width: 18px; height: 18px; margin-right: 13px; }
.node input { appearance: none; width: 13px; height: 13px; margin: 0 -2px 0 11px; border: 1px solid #333; border-radius: 50%; background: #fff; }
.viewcube { position: absolute; right: 16px; top: 17px; width: 60px; height: 64px; }
.cube-face { font: 700 9px "Liberation Sans", sans-serif; fill: #8b8f96; }
.axis { font: 700 9px "Liberation Sans", sans-serif; }
.viewbar { position: absolute; left: 50%; bottom: 4px; transform: translateX(-50%); display: flex; align-items: center; gap: 7px; height: 24px; padding: 0 11px 0 1px; background: #f1f1f1; }
.viewbar svg { width: 18px; height: 18px; }
.viewbar button { gap: 4px; }
.viewbar .compact { gap: 0; }
.viewbar .apart { margin-left: 7px; }

.timeline { position: relative; display: flex; flex: none; height: 50px; background: #f1f1f1; border-top: 2px solid #c8c8c8; }
.playback { display: flex; gap: 9px; width: 142px; padding: 10px 0 0 9px; }
.playback button { height: 36px; }
.playback svg { width: 16px; height: 16px; fill: #444; }
.features { position: relative; display: flex; height: 41px; }
.features::before { content: ""; position: absolute; left: -5px; bottom: 0; width: 29px; height: 2px; background: linear-gradient(90deg, #c8c8c8 3px, transparent 3px 6px, #c8c8c8 6px 9px, transparent 9px 12px, #c8c8c8 12px); }
.features li { position: relative; width: 24px; padding: 14px 3px 0; border-bottom: 2px solid #c8c8c8; }
.features li:first-child { border-color: transparent; }
.features li:last-child { width: 14px; padding-right: 0; margin-right: 10px; }
.features li::after { content: ""; position: absolute; left: 12px; bottom: 0; width: 2px; height: 5px; background: #c8c8c8; }
.features svg { width: 18px; height: 18px; }
.features .arrows { width: 16px; height: 16px; margin: 1px; }
.marker { width: 10px; height: 32px; margin: 9px 0 0 -6px; }
.settings { margin: 10px 12px 0 auto; height: 36px; }
.settings svg { width: 18px; height: 18px; }
.timeline-scroll { position: absolute; right: 6px; top: 0; width: 115px; height: 6px; background: #c9c9c9; border-radius: 0 0 4px 4px; }
```
